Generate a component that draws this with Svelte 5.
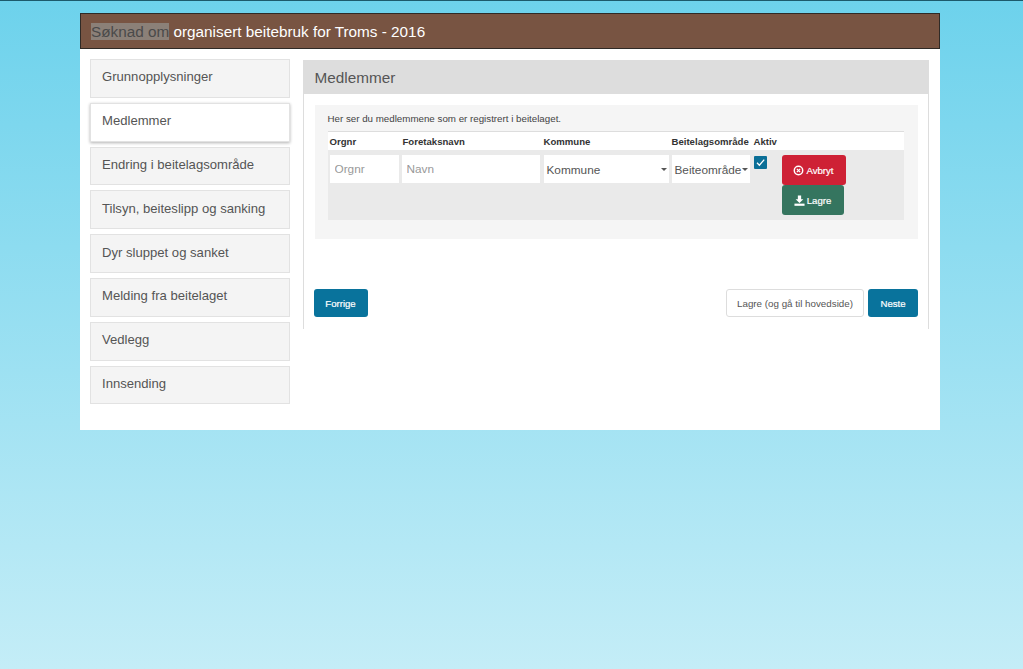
<script>
	const steps = [
		'Grunnopplysninger',
		'Medlemmer',
		'Endring i beitelagsområde',
		'Tilsyn, beiteslipp og sanking',
		'Dyr sluppet og sanket',
		'Melding fra beitelaget',
		'Vedlegg',
		'Innsending'
	];
	let active = $state(1);
</script>

<div class="page">
	<div class="wrap">
		<header class="title"><mark>Søknad om</mark> organisert beitebruk for Troms - 2016</header>
		<div class="body">
			<nav class="steps">
				{#each steps as step, i}
					<button type="button" class="step" class:active={i === active} onclick={() => (active = i)}>{step}</button>
				{/each}
			</nav>

			<section class="panel">
				<h2>Medlemmer</h2>
				<div class="well">
					<p>Her ser du medlemmene som er registrert i beitelaget.</p>
					<div class="members">
						<div class="row head">
							<span class="c-org">Orgnr</span>
							<span class="c-name">Foretaksnavn</span>
							<span class="c-kom">Kommune</span>
							<span class="c-area">Beitelagsområde</span>
							<span class="c-active">Aktiv</span>
						</div>
						<div class="row edit">
							<div class="c-org"><input type="text" placeholder="Orgnr" /></div>
							<div class="c-name"><input type="text" placeholder="Navn" /></div>
							<div class="c-kom"><div class="select">Kommune<i class="caret"></i></div></div>
							<div class="c-area"><div class="select">Beiteområde<i class="caret"></i></div></div>
							<div class="c-active">
								<span class="check">
									<svg viewBox="0 0 13 13" width="13" height="13"><path d="M3 6.8 5.4 9.2 10.2 3.6" fill="none" stroke="#fff" stroke-width="1.3" /></svg>
								</span>
							</div>
							<div class="actions">
								<button type="button" class="btn red">
									<svg viewBox="0 0 12 12" width="11" height="11">
										<circle cx="6" cy="6" r="4.6" fill="none" stroke="#fff" stroke-width="1.6" />
										<path d="M4.2 4.2 7.8 7.8M7.8 4.2 4.2 7.8" stroke="#fff" stroke-width="1.4" />
									</svg>
									Avbryt
								</button>
								<button type="button" class="btn green">
									<svg viewBox="0 0 12 12" width="11" height="11">
										<path d="M4.2 0.5h3.6v4h2.4L6 8.6 1.8 4.5h2.4z" fill="#fff" />
										<rect x="0.5" y="9.4" width="11" height="2.4" fill="#fff" />
									</svg>
									Lagre
								</button>
							</div>
						</div>
					</div>
				</div>

				<div class="footer">
					<button type="button" class="btn blue">Forrige</button>
					<div class="right">
						<button type="button" class="btn plain">Lagre (og gå til hovedside)</button>
						<button type="button" class="btn blue">Neste</button>
					</div>
				</div>
			</section>
		</div>
	</div>
</div>

<style>
	:global(body) {
		margin: 0;
		font-family: "Liberation Sans", Arial, sans-serif;
	}

	.page {
		height: 669px;
		box-sizing: border-box;
		border-top: 1px solid #1c5a6c;
		padding: 12px 83px 0 80px;
		background: linear-gradient(#6dd2ec, #c4edf7);
	}

	.wrap {
		background: #fff;
		height: 417px;
	}

	.title {
		box-sizing: border-box;
		height: 36px;
		background: #785442;
		border: 1px solid #2f2a26;
		padding: 0 10px;
		color: #fff;
		font-size: 15.3px;
		line-height: 35px;
	}

	mark {
		background: #8b8078;
		color: #4a4a4a;
	}

	.body {
		display: flex;
		padding: 10px 11px 0 10px;
		gap: 14px;
	}

	.steps {
		display: flex;
		flex-direction: column;
		gap: 5px;
		width: 199.5px;
		flex: none;
	}

	.step {
		box-sizing: border-box;
		height: 38.8px;
		padding: 0 11px 3px;
		background: #f4f4f4;
		border: 1px solid #e2e2e2;
		color: #555;
		font-family: inherit;
		font-size: 13.1px;
		text-align: left;
	}

	.step.active {
		background: #fff;
		box-shadow: 0 1px 3px rgba(0, 0, 0, 0.3);
	}

	.panel {
		flex: 1;
		height: 269px;
		box-sizing: border-box;
		border-right: 1px solid #ddd;
		border-left: 1px solid #ddd;
		margin-top: 1px;
		margin-left: -1px;
	}

	h2 {
		margin: 0;
		height: 34px;
		padding: 0 11px;
		background: #ddd;
		color: #555;
		font-size: 15.3px;
		font-weight: 400;
		line-height: 36px;
	}

	.well {
		height: 134px;
		box-sizing: border-box;
		margin: 11px 10px 0 11px;
		padding: 8px 14px 0 13px;
		background: #f5f5f5;
	}

	.well p {
		margin: 0 0 7px;
		color: #444;
		font-size: 9.75px;
		line-height: 11px;
	}

	.members {
		border-top: 1px solid #ddd;
	}

	.row {
		display: flex;
		font-size: 9.6px;
		color: #333;
	}

	.head {
		height: 18px;
		background: #fff;
		font-weight: 700;
		line-height: 20px;
	}

	.head .c-name {
		padding-left: 1px;
	}

	.edit {
		height: 70px;
		background: #eaeaea;
		padding-top: 5px;
		box-sizing: border-box;
	}

	.c-org { width: 74px; padding-left: 2px; box-sizing: border-box; }
	.c-name { width: 142px; box-sizing: border-box; }
	.c-kom { width: 128px; }
	.c-area { width: 82px; }
	.c-active { width: 28px; }

	input,
	.select {
		display: block;
		box-sizing: border-box;
		height: 28px;
		border: 0;
		background: #fff;
		font-family: inherit;
		font-size: 11.8px;
		color: #555;
	}

	input {
		padding: 0 5px;
	}

	input::placeholder {
		color: #999;
		opacity: 1;
	}

	.c-org input { width: 69px; }
	.c-name input { width: 138px; }
	.c-kom .select { width: 125px; }
	.c-area .select { width: 78px; }

	.select {
		position: relative;
		padding-left: 3px;
		line-height: 31px;
	}

	.caret {
		position: absolute;
		right: 2px;
		top: 13px;
		border-top: 3px solid #555;
		border-left: 3px solid transparent;
		border-right: 3px solid transparent;
	}

	.check {
		display: block;
		width: 13px;
		height: 13px;
		margin-top: 1px;
		background: #0b6f97;
		border-radius: 1px;
	}

	.actions {
		display: flex;
		flex-direction: column;
		align-items: flex-start;
	}

	.btn {
		box-sizing: border-box;
		height: 28px;
		border: 0;
		border-radius: 3px;
		color: #fff;
		font-family: inherit;
		font-size: 9.6px;
		-webkit-text-stroke: 0.2px #fff;
		padding: 0;
		display: inline-flex;
		align-items: center;
		justify-content: center;
		gap: 2px;
	}

	.red {
		width: 64px;
		height: 30px;
		background: #ce2135;
	}

	.green {
		width: 62px;
		height: 30px;
		background: #35755f;
	}

	.blue {
		width: 54px;
		background: #09739c;
	}

	.right .blue {
		width: 50px;
	}

	.plain {
		width: 138px;
		background: #fff;
		border: 1px solid #ddd;
		color: #555;
		font-size: 9.8px;
		-webkit-text-stroke: 0;
	}

	.footer {
		display: flex;
		justify-content: space-between;
		margin: 50px 10px 0;
	}

	.right {
		display: flex;
		gap: 4px;
	}
</style>
